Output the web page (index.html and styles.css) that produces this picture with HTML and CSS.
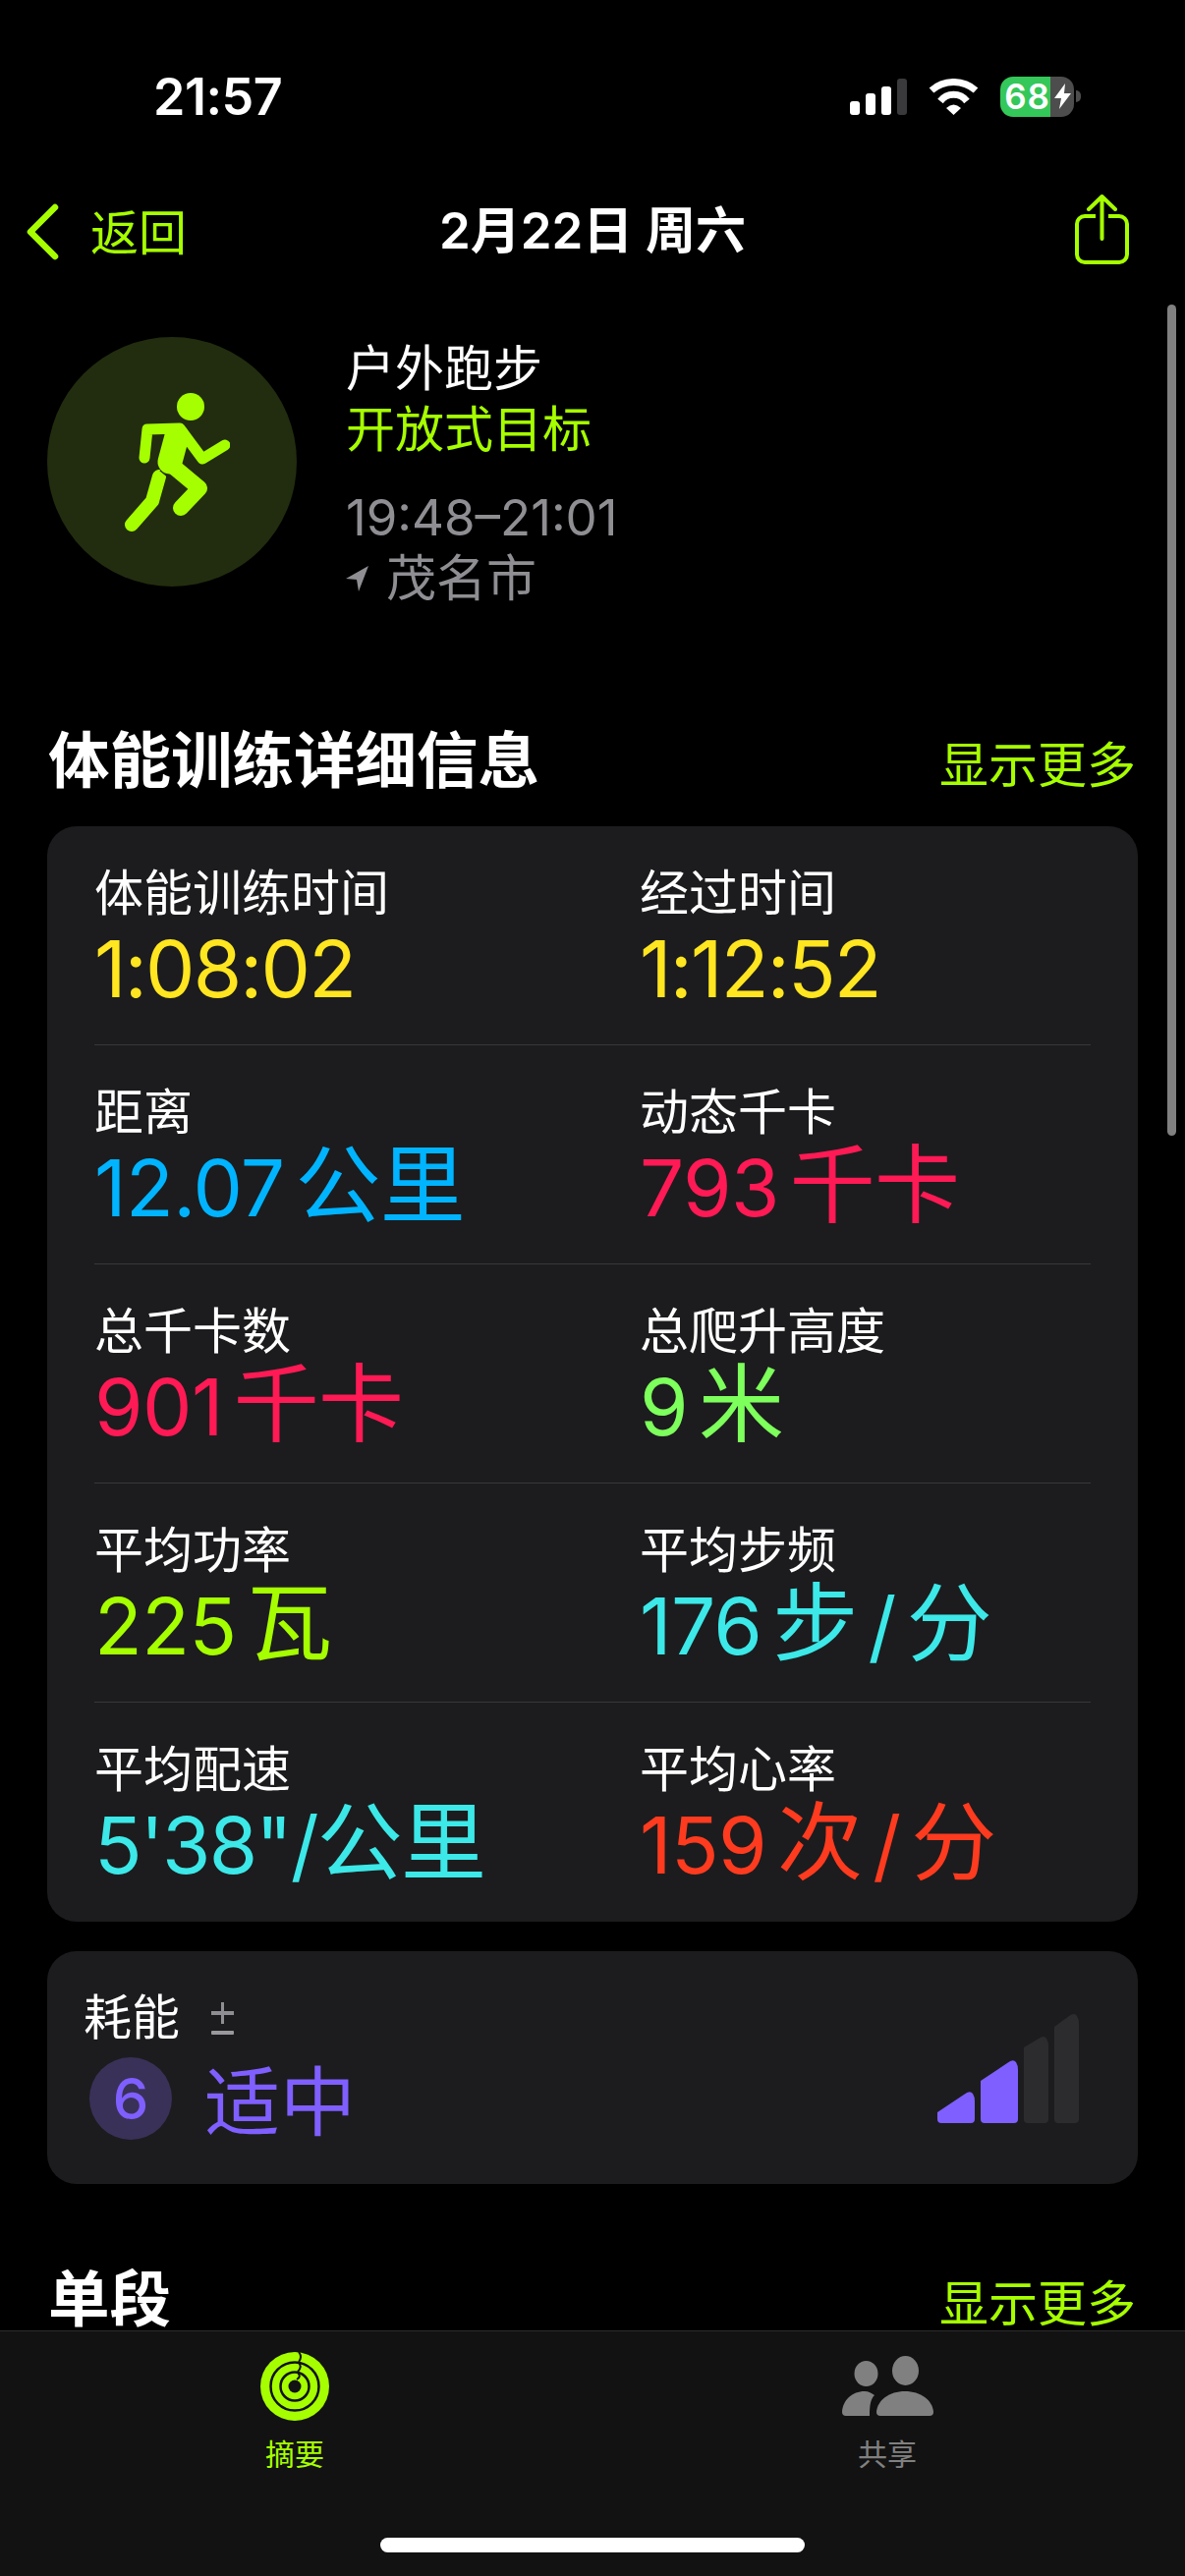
FILE: index.html
```html
<!DOCTYPE html>
<html lang="zh-CN">
<head>
  <meta charset="UTF-8">
  <title>体能训练详细信息</title>
  <link rel="stylesheet" href="styles.css">
</head>
<body>
  <div class="screen">
    <!-- Status bar -->
    <div class="status">
      <span class="clock">21:57</span>
      <div class="status-icons">
        <svg width="58" height="37" viewBox="0 0 58 37">
          <rect x="0" y="23" width="10" height="14" rx="3" fill="#fff"/>
          <rect x="16" y="15" width="10" height="22" rx="3" fill="#fff"/>
          <rect x="32" y="8" width="10" height="29" rx="3" fill="#fff"/>
          <rect x="48" y="0" width="10" height="37" rx="3" fill="#3a3a3c"/>
        </svg>
        <svg width="51" height="37" viewBox="0 0 51 37">
          <path d="M3 12 A34 34 0 0 1 48 12" fill="none" stroke="#fff" stroke-width="7"/>
          <path d="M12 23 A17 17 0 0 1 39 23" fill="none" stroke="#fff" stroke-width="7"/>
          <path d="M18 30 Q25.5 23 33 30 L25.5 37 Z" fill="#fff"/>
        </svg>
        <div class="battery">
          <div class="battery-body">
            <span class="battery-fill">68</span>
            <span class="battery-rest">
              <svg width="17" height="26" viewBox="0 0 17 26"><path d="M11 0 L0 15 H7 L5 26 L17 10 H10 Z" fill="#fff"/></svg>
            </span>
          </div>
          <span class="battery-cap"></span>
        </div>
      </div>
    </div>

    <!-- Nav bar -->
    <div class="nav">
      <div class="nav-back">
        <svg width="36" height="58" viewBox="0 0 36 58"><path d="M31 4 L6 29 L31 54" fill="none" stroke="#a6ff00" stroke-width="6.5" stroke-linecap="round" stroke-linejoin="round"/></svg>
        <span>返回</span>
      </div>
      <div class="nav-title">2月22日 周六</div>
      <svg class="nav-share" width="55" height="71" viewBox="0 0 55 71">
        <path d="M21 22 H10 A8 8 0 0 0 2 30 V61 A8 8 0 0 0 10 69 H45 A8 8 0 0 0 53 61 V30 A8 8 0 0 0 45 22 H34" fill="none" stroke="#a6ff00" stroke-width="4"/>
        <path d="M27.5 45 V2 M14 15 L27.5 2 L41 15" fill="none" stroke="#a6ff00" stroke-width="4" stroke-linecap="round" stroke-linejoin="round"/>
      </svg>
    </div>

    <!-- Workout header -->
    <div class="workout">
      <div class="workout-icon">
        <svg width="118" height="150" viewBox="116 395 118 150">
          <path d="M162 485 L155 510 L134 534" fill="none" stroke="#a6ff00" stroke-width="14" stroke-linecap="round" stroke-linejoin="round"/>
          <path d="M170 470 L203 497" fill="none" stroke="#222d0f" stroke-width="24"/>
          <ellipse cx="194" cy="414" rx="14" ry="14" fill="#a6ff00"/>
          <path d="M147 466 L150 437 L183 436 L206 467 L229 453" fill="none" stroke="#a6ff00" stroke-width="11" stroke-linecap="round" stroke-linejoin="round"/>
          <path d="M180 444 L173 470" fill="none" stroke="#a6ff00" stroke-width="25" stroke-linecap="round"/>
          <path d="M173 472 L203 497 L184 517" fill="none" stroke="#a6ff00" stroke-width="16" stroke-linecap="round" stroke-linejoin="round"/>
        </svg>
      </div>
      <div class="workout-info">
        <div>户外跑步</div>
        <div class="workout-goal">开放式目标</div>
        <div class="workout-time">19:48–21:01</div>
        <div class="workout-place">
          <svg width="24" height="26" viewBox="0 0 24 26"><path d="M23 0 L0 13 L11 14 L13 26 Z" fill="#8e8e93"/></svg>
          <span>茂名市</span>
        </div>
      </div>
    </div>

    <!-- Details -->
    <div class="section-head section-details">
      <h2>体能训练详细信息</h2>
      <span class="more">显示更多</span>
    </div>
    <div class="card metrics">
      <div class="metric-row">
        <div><div class="label">体能训练时间</div><div class="value tight yellow">1:08:02</div></div>
        <div><div class="label">经过时间</div><div class="value tight yellow">1:12:52</div></div>
      </div>
      <div class="metric-row">
        <div><div class="label">距离</div><div class="value blue">12.07 <span class="unit">公里</span></div></div>
        <div><div class="label">动态千卡</div><div class="value pink">793 <span class="unit">千卡</span></div></div>
      </div>
      <div class="metric-row">
        <div><div class="label">总千卡数</div><div class="value pink">901 <span class="unit">千卡</span></div></div>
        <div><div class="label">总爬升高度</div><div class="value green">9 <span class="unit">米</span></div></div>
      </div>
      <div class="metric-row">
        <div><div class="label">平均功率</div><div class="value lime">225 <span class="unit">瓦</span></div></div>
        <div><div class="label">平均步频</div><div class="value cyan">176 <span class="unit">步</span> / <span class="unit">分</span></div></div>
      </div>
      <div class="metric-row">
        <div><div class="label">平均配速</div><div class="value tight cyan">5'38"/<span class="unit">公里</span></div></div>
        <div><div class="label">平均心率</div><div class="value red">159 <span class="unit">次</span> / <span class="unit">分</span></div></div>
      </div>
    </div>

    <!-- Effort -->
    <div class="card effort">
      <div class="effort-left">
        <div class="effort-label">
          <span>耗能</span>
          <svg width="23" height="33" viewBox="0 0 23 33">
            <rect x="0" y="9" width="23" height="4" fill="#8e8e93"/>
            <rect x="10" y="0" width="3" height="22" fill="#8e8e93"/>
            <rect x="0" y="29" width="23" height="4" rx="1" fill="#98989d"/>
          </svg>
        </div>
        <div class="effort-level">
          <span class="effort-badge">6</span>
          <span class="effort-text">适中</span>
        </div>
      </div>
      <svg width="144" height="112" viewBox="0 0 144 112">
        <path d="M4 112 Q0 112 0 108 V101 L27 83 Q33 78 36 82 Q38 85 38 90 V108 Q38 112 34 112 Z" fill="#7f5fff"/>
        <path d="M48 112 Q44 112 44 108 V69 L71 51 Q77 46 80 50 Q82 53 82 58 V108 Q82 112 78 112 Z" fill="#7f5fff"/>
        <path d="M92 112 Q88 112 88 108 V35 L103 26 Q109 22 111 26 Q113 29 113 34 V108 Q113 112 109 112 Z" fill="#2c2c2e"/>
        <path d="M123 112 Q119 112 119 108 V14 L134 3 Q140 -1 142 3 Q144 6 144 11 V108 Q144 112 140 112 Z" fill="#2c2c2e"/>
      </svg>
    </div>

    <div class="section-head section-segments">
      <h2>单段</h2>
      <span class="more">显示更多</span>
    </div>

    <!-- Scroll indicator -->
    <div class="scrollbar"></div>

    <!-- Tab bar -->
    <div class="tabbar">
      <div class="tabs">
        <div class="tab tab-active">
          <svg width="70" height="70" viewBox="0 0 70 70">
            <circle cx="35" cy="35" r="35" fill="#a6ff00"/>
            <circle cx="35" cy="35" r="24.5" fill="none" stroke="#121212" stroke-width="2.5"/>
            <circle cx="35" cy="35" r="14.5" fill="none" stroke="#121212" stroke-width="2.5"/>
            <circle cx="35" cy="35" r="6.5" fill="#121212"/>
            <path d="M39 0 Q43 5 39 10 M39 11 Q43 15 38 20 M38 21 Q42 25 37 28" fill="none" stroke="#121212" stroke-width="2"/>
          </svg>
          <span>摘要</span>
        </div>
        <div class="tab">
          <svg width="93" height="70" viewBox="0 -4 93 70">
            <ellipse cx="24.5" cy="18" rx="12" ry="13" fill="#808080"/>
            <ellipse cx="64.5" cy="15" rx="13.5" ry="15" fill="#808080"/>
            <path d="M0 57 C1 45 10 36 23 36 C27 36 30 38 33 40 C29 44 28 50 28 61 H4 Q0 61 0 57 Z" fill="#808080"/>
            <path d="M35 57 C36 45 48 36 64 36 C80 36 92 45 93 57 Q93 61 89 61 H39 Q35 61 35 57 Z" fill="#808080"/>
          </svg>
          <span>共享</span>
        </div>
      </div>
      <div class="home-bar"></div>
    </div>
  </div>
</body>
</html>
```

FILE: styles.css
```css
* {
  box-sizing: border-box;
}
html, body {
  margin: 0;
  background: #000;
}
.screen {
  position: relative;
  width: 1206px;
  height: 2622px;
  overflow: hidden;
  background: #000;
  color: #fff;
  font-family: "Inter", "Noto Sans CJK SC", sans-serif;
}

/* status bar */
.status {
  display: flex;
  justify-content: space-between;
  align-items: center;
  height: 136px;
  padding: 60px 106px 0 156px;
}
.clock {
  font-size: 52px;
  font-weight: 600;
  letter-spacing: -0.5px;
}
.status-icons {
  display: flex;
  align-items: center;
  gap: 22px;
}
.battery {
  display: flex;
  align-items: center;
  gap: 2px;
}
.battery-body {
  display: flex;
  width: 75px;
  height: 41px;
  border-radius: 13px;
  overflow: hidden;
}
.battery-fill {
  width: 51px;
  background: #34c759;
  font-size: 35px;
  font-weight: 600;
  line-height: 41px;
  text-align: right;
  letter-spacing: 1px;
}
.battery-rest {
  display: flex;
  align-items: center;
  justify-content: center;
  flex: 1;
  background: #4d4d4d;
}
.battery-cap {
  width: 5px;
  height: 12px;
  background: #4d4d4d;
  border-radius: 0 5px 5px 0;
}

/* nav */
.nav {
  position: relative;
  display: flex;
  justify-content: space-between;
  align-items: center;
  height: 110px;
  margin-top: 45px;
  padding: 0 57px 0 25px;
}
.nav-back {
  display: flex;
  align-items: center;
  gap: 31px;
  color: #a6ff00;
  font-size: 49px;
}
.nav-back span {
  padding-bottom: 6px;
}
.nav-title {
  position: absolute;
  left: 0;
  right: 0;
  padding-bottom: 10px;
  text-align: center;
  font-size: 51px;
  font-weight: 600;
}
.nav-share {
  margin-bottom: 5px;
}

/* workout header */
.workout {
  display: flex;
  gap: 50px;
  padding: 0 48px;
  margin-top: 52px;
}
.workout-icon {
  display: flex;
  align-items: center;
  justify-content: center;
  width: 254px;
  height: 254px;
  border-radius: 50%;
  background: #222d0f;
}
.workout-info {
  padding-top: 1px;
  font-size: 50px;
  line-height: 62px;
}
.workout-goal {
  color: #a6ff00;
}
.workout-time {
  margin-top: 28px;
  color: #8e8e93;
  font-size: 51px;
}
.workout-place {
  display: flex;
  align-items: center;
  gap: 17px;
  color: #8e8e93;
  font-size: 51px;
}

/* sections */
.section-head {
  display: flex;
  justify-content: space-between;
  align-items: baseline;
  padding: 0 50px 0 49px;
}
.section-head h2 {
  margin: 0;
  font-size: 62.5px;
  font-weight: 700;
}
.section-details {
  margin-top: 104px;
}
.section-segments {
  margin-top: 67px;
}
.more {
  color: #a6ff00;
  font-size: 50px;
}
.card {
  margin: 0 48px;
  background: #1c1c1e;
  border-radius: 30px;
}

/* metrics */
.metrics {
  margin-top: 26px;
  padding: 0 48px;
}
.metric-row {
  display: grid;
  grid-template-columns: 555px 1fr;
  height: 223px;
  padding-top: 37px;
  border-bottom: 1px solid #38383a;
}
.metric-row:last-child {
  border-bottom: none;
}
.label {
  font-size: 50px;
  line-height: 62px;
}
.value {
  font-size: 80px;
  line-height: 92px;
  letter-spacing: -0.6px;
  word-spacing: -11px;
  white-space: nowrap;
}
.value.tight {
  letter-spacing: -1.8px;
}
.unit {
  font-size: 87px;
  line-height: 80px;
}
.yellow { color: #ffe620; }
.blue { color: #00b4ff; }
.pink { color: #ff1a55; }
.green { color: #7dff5c; }
.lime { color: #a6ff00; }
.cyan { color: #3ce8e8; }
.red { color: #ff3b1f; }

/* effort */
.effort {
  display: flex;
  justify-content: space-between;
  align-items: center;
  height: 237px;
  margin-top: 30px;
  padding: 0 60px 0 37px;
}
.effort-left {
  padding-bottom: 3px;
}
.effort-label {
  display: flex;
  align-items: center;
  gap: 32px;
  font-size: 49px;
  line-height: 60px;
}
.effort-level {
  display: flex;
  align-items: center;
  gap: 33px;
  height: 92px;
  margin: 6px 0 0 6px;
}
.effort-badge {
  display: flex;
  align-items: center;
  justify-content: center;
  width: 84px;
  height: 84px;
  border-radius: 50%;
  background: #3a3158;
  color: #7f5fff;
  font-size: 58px;
  font-weight: 500;
}
.effort-text {
  margin-top: 8px;
  color: #7f5fff;
  font-size: 77px;
  line-height: 92px;
}

/* scroll indicator */
.scrollbar {
  position: absolute;
  top: 310px;
  right: 9px;
  width: 9px;
  height: 846px;
  border-radius: 5px;
  background: #808080;
}

/* tab bar */
.tabbar {
  position: absolute;
  left: 0;
  right: 0;
  bottom: 0;
  height: 250px;
  background: #121212;
  border-top: 1px solid #2c2c2e;
}
.tabs {
  display: grid;
  grid-template-columns: 600px 606px;
  padding-top: 21px;
}
.tab {
  display: flex;
  flex-direction: column;
  align-items: center;
  gap: 10px;
  color: #808080;
  font-size: 30px;
}
.tab-active {
  color: #a6ff00;
}
.home-bar {
  position: absolute;
  left: 387px;
  bottom: 24px;
  width: 432px;
  height: 15px;
  border-radius: 8px;
  background: #fff;
}
```
